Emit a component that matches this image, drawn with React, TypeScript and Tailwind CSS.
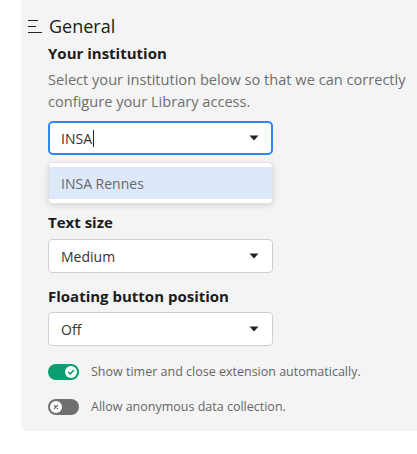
import React from "react";

function Caret() {
  return (
    <svg width="10" height="6" viewBox="0 0 10 6" className="shrink-0">
      <path d="M0.5 0.5 L9.5 0.5 L5 5.5 Z" fill="#222" />
    </svg>
  );
}

function Select({ value }: { value: string }) {
  return (
    <div className="w-[225px] h-[34px] bg-white border border-[#cfcfcf] rounded-[4px] flex items-center justify-between pl-[12px] pr-[13px] text-[14px] text-[#333]">
      <span>{value}</span>
      <Caret />
    </div>
  );
}

export default function App() {
  return (
    <div
      className="w-[417px] h-[454px] bg-white pl-[21px]"
      style={{ fontFamily: '"Open Sans", "Noto Sans", sans-serif' }}
    >
      <div className="bg-[#f4f4f4] h-[431px] rounded-bl-[6px] pt-[13px]">
        <div className="flex items-center h-[26px]">
          <svg width="20" height="20" viewBox="0 0 20 20" className="ml-[6px] mr-[2px]">
            <line x1="1" y1="4.5" x2="11" y2="4.5" stroke="#222" strokeWidth="1" />
            <line x1="1" y1="10.5" x2="9" y2="10.5" stroke="#222" strokeWidth="1" />
            <line x1="1" y1="16.5" x2="15" y2="16.5" stroke="#222" strokeWidth="1" />
          </svg>
          <span className="text-[18px] font-medium text-[#1b1b1b]">General</span>
        </div>
        <div className="pl-[27px] pt-[3px]">
          <div className="text-[15px] font-bold text-[#1b1b1b] leading-[22px]">Your institution</div>
          <div className="text-[14.6px] text-[#6e6e6e] leading-[22px] mt-[4px]">
            Select your institution below so that we can correctly configure your Library access.
          </div>
          <div className="mt-[9px] w-[225px] h-[34px] bg-white border-2 border-[#2f86f6] rounded-[5px] flex items-center justify-between pl-[11px] pr-[12px] text-[14px] text-[#333]">
            <span className="flex items-center">
              INSA<span className="inline-block w-px h-[17px] bg-[#222] ml-[1px]" />
            </span>
            <Caret />
          </div>
          <div className="mt-[7px] w-[225px] bg-white rounded-[4px] border border-[#e2e2e2] shadow-[0_2px_6px_rgba(0,0,0,0.12)] py-[4px]">
            <div className="bg-[#dde9fb] h-[32px] flex items-center pl-[12px] text-[14px] text-[#666]">INSA Rennes</div>
          </div>
          <div className="text-[15px] font-bold text-[#1b1b1b] leading-[22px] mt-[7px]">Text size</div>
          <div className="mt-[6px]"><Select value="Medium" /></div>
          <div className="text-[15px] font-bold text-[#1b1b1b] leading-[22px] mt-[12px]">Floating button position</div>
          <div className="mt-[5px]"><Select value="Off" /></div>
          <div className="flex items-center mt-[17px] h-[18px]">
            <div className="w-[31px] h-[16px] rounded-full bg-[#0b9e72] flex items-center justify-end pr-[2px]">
              <div className="w-[12px] h-[12px] rounded-full bg-white flex items-center justify-center">
                <svg width="8" height="8" viewBox="0 0 8 8">
                  <path d="M1.5 4.2 L3.3 6 L6.6 2.2" stroke="#0b9e72" strokeWidth="1.5" fill="none" strokeLinecap="round" strokeLinejoin="round" />
                </svg>
              </div>
            </div>
            <span className="ml-[12px] text-[12.5px] text-[#666]">Show timer and close extension automatically.</span>
          </div>
          <div className="flex items-center mt-[17px] h-[18px]">
            <div className="w-[31px] h-[16px] rounded-full bg-[#6f6f6f] flex items-center justify-start pl-[2px]">
              <div className="w-[12px] h-[12px] rounded-full bg-white flex items-center justify-center">
                <svg width="8" height="8" viewBox="0 0 8 8">
                  <path d="M2.3 2.3 L5.7 5.7 M5.7 2.3 L2.3 5.7" stroke="#555" strokeWidth="1.1" fill="none" strokeLinecap="round" />
                </svg>
              </div>
            </div>
            <span className="ml-[12px] text-[12.5px] text-[#666]">Allow anonymous data collection.</span>
          </div>
        </div>
      </div>
    </div>
  );
}
